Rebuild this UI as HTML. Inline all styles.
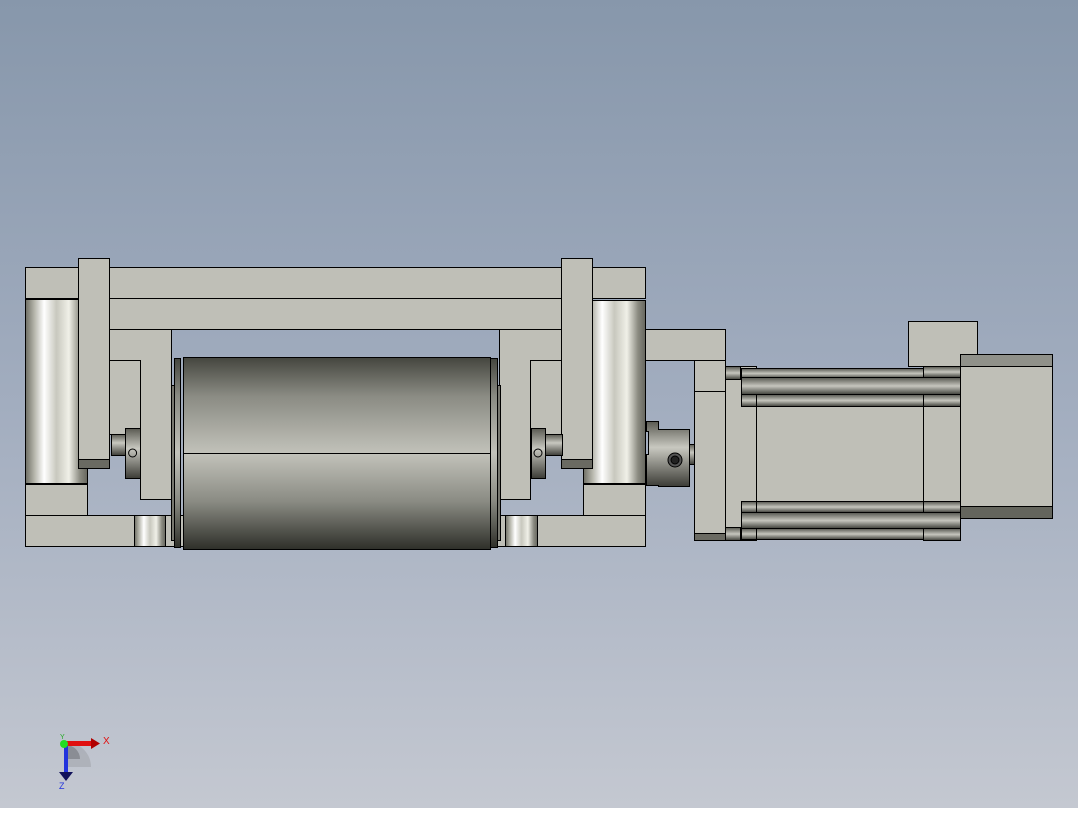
<!DOCTYPE html>
<html><head><style>html,body{margin:0;padding:0}body{width:1078px;height:808px;overflow:hidden}</style></head><body>
<svg width="1078" height="808" viewBox="0 0 1078 808" xmlns="http://www.w3.org/2000/svg">
<defs>
<linearGradient id="bg" x1="0" y1="0" x2="0" y2="1"><stop offset="0" stop-color="#8797ab"/><stop offset="0.5" stop-color="#a2adbf"/><stop offset="1" stop-color="#c4c8d1"/></linearGradient>
<linearGradient id="rol" x1="0" y1="0" x2="1" y2="0"><stop offset="0" stop-color="#6e6e64"/><stop offset="0.15" stop-color="#b8b8ae"/><stop offset="0.3" stop-color="#ffffff"/><stop offset="0.5" stop-color="#c8c8be"/><stop offset="0.7" stop-color="#f0f0e8"/><stop offset="0.88" stop-color="#8a8a80"/><stop offset="1" stop-color="#66665e"/></linearGradient>
<linearGradient id="drum" x1="0" y1="0" x2="0" y2="1"><stop offset="0" stop-color="#45463f"/><stop offset="0.2" stop-color="#8a8b83"/><stop offset="0.5" stop-color="#c2c2ba"/><stop offset="0.75" stop-color="#8a8b83"/><stop offset="1" stop-color="#2e2f29"/></linearGradient>
<linearGradient id="rod" x1="0" y1="0" x2="0" y2="1"><stop offset="0" stop-color="#55564f"/><stop offset="0.5" stop-color="#c6c6be"/><stop offset="1" stop-color="#3f403a"/></linearGradient>
<linearGradient id="cyl" x1="0" y1="0" x2="0" y2="1"><stop offset="0" stop-color="#5a5a52"/><stop offset="0.4" stop-color="#c8c8c0"/><stop offset="1" stop-color="#3c3c36"/></linearGradient>
</defs>
<rect width="1078" height="808" fill="url(#bg)"/>
<g stroke="#000" stroke-width="1" fill="#bfbfb7">
<!-- top bars -->
<rect x="25.5" y="267.5" width="620" height="31"/>
<rect x="109.5" y="298.5" width="453" height="31"/>
<!-- rollers -->
<rect x="25.5" y="299.5" width="62" height="184" fill="url(#rol)"/>
<rect x="583.5" y="300.5" width="62" height="183" fill="url(#rol)"/>
<!-- lower blocks and bottom bar -->
<rect x="25.5" y="484.5" width="62" height="31"/>
<rect x="583.5" y="484.5" width="62" height="31"/>
<rect x="25.5" y="515.5" width="620" height="31"/>
<rect x="134.5" y="515.5" width="31" height="31" fill="url(#rol)"/>
<rect x="505.5" y="515.5" width="32" height="31" fill="url(#rol)"/>
<!-- L brackets -->
<path d="M109.5 329.5H171.5V499.5H140.5V360.5H109.5Z"/>
<rect x="109.5" y="360.5" width="31" height="74"/>
<path d="M499.5 329.5H562.5V360.5H530.5V499.5H499.5Z"/>
<rect x="530.5" y="360.5" width="32" height="74"/>
<!-- vertical plates -->
<rect x="78.5" y="258.5" width="31" height="210"/>
<rect x="78.5" y="459.5" width="31" height="9" fill="#6a6a62"/>
<rect x="561.5" y="258.5" width="31" height="210"/>
<rect x="561.5" y="459.5" width="31" height="9" fill="#6a6a62"/>
<!-- collars -->
<rect x="111.5" y="434.5" width="14" height="21" fill="url(#cyl)"/>
<rect x="125.5" y="428.5" width="15" height="50" fill="url(#cyl)"/>
<circle cx="132.6" cy="453" r="4" fill="none"/>
<rect x="545.5" y="434.5" width="17" height="21" fill="url(#cyl)"/>
<rect x="531.5" y="428.5" width="14" height="50" fill="url(#cyl)"/>
<circle cx="538" cy="453" r="4" fill="none"/>
<!-- drum -->
<rect x="171.5" y="385.5" width="3" height="155" fill="#77776f"/>
<rect x="174.5" y="358.5" width="6" height="189" fill="url(#drum)"/>
<rect x="497.5" y="385.5" width="3" height="155" fill="#77776f"/>
<rect x="490.5" y="358.5" width="7" height="189" fill="url(#drum)"/>
<rect x="183.5" y="357.5" width="307" height="192" fill="url(#drum)"/>
<line x1="183" y1="453.5" x2="490" y2="453.5"/>
<!-- bar to motor -->
<rect x="645.5" y="329.5" width="80" height="31"/>
<!-- coupling -->
<rect x="689.5" y="444.5" width="6" height="20" fill="url(#cyl)"/>
<path d="M646.5 421.5H658.5V429.5H689.5V486.5H658.5V485.5H646.5V454.5H648.5V431.5H646.5Z" fill="url(#cyl)"/>
<circle cx="675" cy="460" r="7" fill="#555"/>
<circle cx="675" cy="460" r="4" fill="#222"/>
<!-- motor flange -->
<rect x="694.5" y="360.5" width="31" height="180"/>
<line x1="694" y1="391.5" x2="726" y2="391.5"/>
<rect x="694.5" y="533.5" width="31" height="7" fill="#6a6a62"/>
<rect x="725.5" y="366.5" width="31" height="174"/>
<rect x="725.5" y="366.5" width="15" height="13" fill="url(#rod)"/>
<rect x="725.5" y="527.5" width="15" height="13" fill="url(#rod)"/>
<!-- body -->
<rect x="756.5" y="406.5" width="204" height="95"/>
<line x1="923.5" y1="406" x2="923.5" y2="501"/>
<!-- rods -->
<rect x="741.5" y="368.5" width="182" height="10" fill="url(#rod)"/>
<rect x="923.5" y="366.5" width="37" height="11" fill="url(#rod)"/>
<rect x="741.5" y="377.5" width="219" height="17" fill="url(#rod)"/>
<rect x="741.5" y="394.5" width="219" height="12" fill="url(#rod)"/>
<line x1="756.5" y1="394" x2="756.5" y2="406"/><line x1="923.5" y1="394" x2="923.5" y2="406"/>
<rect x="741.5" y="501.5" width="219" height="11" fill="url(#rod)"/>
<line x1="756.5" y1="501" x2="756.5" y2="512"/><line x1="923.5" y1="501" x2="923.5" y2="512"/>
<rect x="741.5" y="512.5" width="219" height="16" fill="url(#rod)"/>
<rect x="741.5" y="528.5" width="182" height="11" fill="url(#rod)"/>
<rect x="923.5" y="528.5" width="37" height="12" fill="url(#rod)"/>
<line x1="756.5" y1="528" x2="756.5" y2="540"/>
<!-- back box -->
<rect x="908.5" y="321.5" width="69" height="45"/>
<rect x="960.5" y="354.5" width="92" height="164"/>
<rect x="960.5" y="354.5" width="92" height="12" fill="#90918a"/>
<rect x="960.5" y="506.5" width="92" height="12" fill="#64655d"/>
</g>
<!-- triad -->
<path d="M66 742 A25 25 0 0 1 91 767 L66 767Z" fill="#a9acb4" opacity="0.8"/>
<path d="M66 745 A14 14 0 0 1 80 759 L66 759Z" fill="#8a8d94"/>
<rect x="64" y="743" width="4" height="30" fill="#2233dd"/>
<polygon points="59,772 73,772 66,781" fill="#11115a"/>
<rect x="64" y="741" width="28" height="5" fill="#e01010"/>
<polygon points="91,738 100,743.5 91,749" fill="#b00000"/>
<circle cx="64" cy="744" r="4" fill="#22dd22"/>
<text x="103" y="744" font-family="Liberation Sans,sans-serif" font-size="10" fill="#e01010">X</text>
<text x="59" y="789" font-family="Liberation Sans,sans-serif" font-size="9" fill="#2233dd">Z</text>
<text x="60" y="739" font-family="Liberation Sans,sans-serif" font-size="7" fill="#22aa22">Y</text>
</svg>
</body></html>
